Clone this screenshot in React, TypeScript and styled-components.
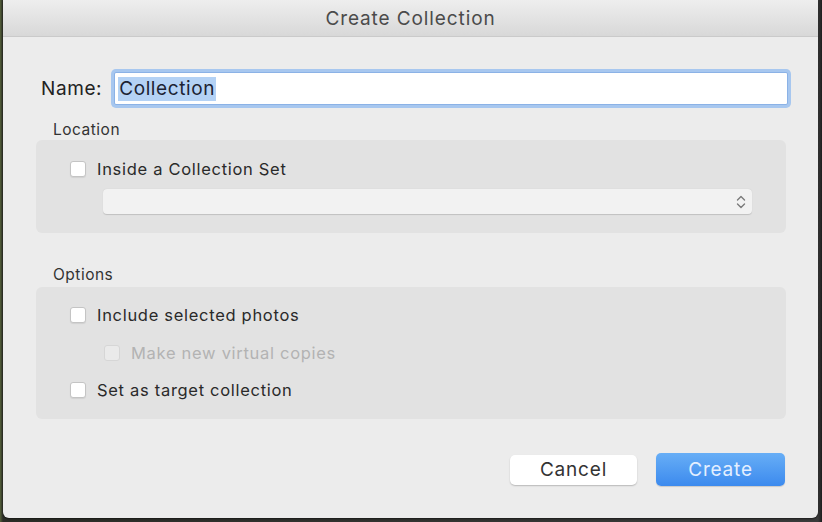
import React from 'react';
import styled, { createGlobalStyle } from 'styled-components';

const GlobalStyle = createGlobalStyle`
  html, body {
    margin: 0;
    padding: 0;
    background: #2e3129;
  }
  body {
    font-family: Inter, "Noto Sans", "Liberation Sans", sans-serif;
    -webkit-font-smoothing: antialiased;
  }
`;

const Screen = styled.div`
  width: 822px;
  height: 522px;
  background: linear-gradient(90deg, #55613a 0px, #2b2d27 3px, #3a3a3a 818px, #1d1d1d 822px);
  overflow: hidden;
`;

const Dialog = styled.div`
  width: 815px;
  height: 518px;
  margin-left: 3px;
  background: #ececec;
  border-radius: 0 0 6px 6px;
  display: flex;
  flex-direction: column;
  box-shadow: 0 1px 2px rgba(0, 0, 0, 0.5);
`;

const TitleBar = styled.div`
  height: 36px;
  flex-shrink: 0;
  display: flex;
  align-items: center;
  justify-content: center;
  background: linear-gradient(#eeeeee, #d8d8d8);
  border-bottom: 1px solid #cacaca;
  font-size: 19px;
  letter-spacing: 0.9px;
  color: #4b4b4b;
`;

const Body = styled.div`
  flex: 1;
  display: flex;
  flex-direction: column;
  padding: 31px 32px 0 33px;
`;

const NameRow = styled.div`
  display: flex;
  align-items: center;
  gap: 8px;
  margin-right: -6px;
  padding-left: 5px;
`;

const NameLabel = styled.span`
  font-size: 19px;
  letter-spacing: 0.6px;
  color: #222;
`;

const NameField = styled.div`
  flex: 1;
  height: 33px;
  margin: 4px;
  display: flex;
  align-items: center;
  background: #fff;
  border: 1px solid #8bb2e6;
  box-shadow: 0 0 0 3px #a7c7ef;
  border-radius: 2px;
  box-sizing: border-box;
  padding-left: 3px;
`;

const Selected = styled.span`
  background: #b4d2f5;
  font-size: 19px;
  letter-spacing: 0.6px;
  line-height: 24px;
  color: #1c2333;
  padding: 0 1px;
`;

const SectionLabel = styled.div<{ $top: number }>`
  margin-top: ${p => p.$top}px;
  padding-left: 17px;
  font-size: 15.5px;
  letter-spacing: 0.5px;
  line-height: 18px;
  color: #333;
`;

const Group = styled.div<{ $height: number; $gap: number; $pad: number }>`
  margin-top: ${p => p.$gap}px;
  height: ${p => p.$height}px;
  box-sizing: border-box;
  background: #e2e2e2;
  border-radius: 6px;
  display: flex;
  flex-direction: column;
  padding: ${p => p.$pad}px 34px 0 34px;
`;

const CheckRow = styled.label<{ $indent?: boolean; $disabled?: boolean }>`
  display: flex;
  align-items: center;
  gap: 11px;
  height: 18px;
  margin-left: ${p => (p.$indent ? 34 : 0)}px;
  font-size: 16.5px;
  letter-spacing: 0.7px;
  color: ${p => (p.$disabled ? '#b3b3b3' : '#2a2a2a')};
`;

const Box = styled.span<{ $disabled?: boolean }>`
  width: 16px;
  height: 16px;
  box-sizing: border-box;
  border-radius: 3px;
  background: ${p => (p.$disabled ? '#eaeaea' : '#fff')};
  border: 1px solid ${p => (p.$disabled ? '#d6d6d6' : '#c4c4c4')};
  box-shadow: ${p => (p.$disabled ? 'none' : '0 1px 1px rgba(0,0,0,0.08)')};
  flex-shrink: 0;
`;

const Select = styled.div`
  margin: 11px 0 0 33px;
  height: 25px;
  background: #f2f2f2;
  border-radius: 4px;
  box-shadow: 0 0.5px 1px rgba(0, 0, 0, 0.15);
  display: flex;
  align-items: center;
  justify-content: flex-end;
  padding-right: 5px;
`;

const Spacer = styled.div<{ $h: number }>`
  height: ${p => p.$h}px;
  flex-shrink: 0;
`;

const Footer = styled.div`
  margin-top: auto;
  margin-bottom: 32px;
  display: flex;
  justify-content: flex-end;
  align-items: center;
  gap: 19px;
  padding-right: 1px;
`;

const Button = styled.button<{ $primary?: boolean }>`
  font-family: inherit;
  font-size: 19px;
  letter-spacing: 0.8px;
  border: none;
  border-radius: 5px;
  cursor: default;
  width: ${p => (p.$primary ? 129 : 127)}px;
  height: ${p => (p.$primary ? 33 : 30)}px;
  color: ${p => (p.$primary ? '#e4efff' : '#333')};
  background: ${p => (p.$primary ? 'linear-gradient(#67aef6, #3c8aee)' : '#fff')};
  box-shadow: ${p => (p.$primary ? '0 1px 1px rgba(0,0,0,0.15)' : '0 1px 1.5px rgba(0,0,0,0.22)')};
`;

const Stepper = () => (
  <svg width="12" height="16" viewBox="0 0 12 16" fill="none" stroke="#7a7a7a" strokeWidth="1.4" strokeLinecap="round" strokeLinejoin="round">
    <path d="M2.5 6 L6 2.5 L9.5 6" />
    <path d="M2.5 10 L6 13.5 L9.5 10" />
  </svg>
);

export default function App() {
  return (
    <Screen>
      <GlobalStyle />
      <Dialog>
        <TitleBar>Create Collection</TitleBar>
        <Body>
          <NameRow>
            <NameLabel>Name:</NameLabel>
            <NameField>
              <Selected>Collection</Selected>
            </NameField>
          </NameRow>
          <SectionLabel $top={12}>Location</SectionLabel>
          <Group $height={93} $gap={1} $pad={20}>
            <CheckRow>
              <Box />
              Inside a Collection Set
            </CheckRow>
            <Select>
              <Stepper />
            </Select>
          </Group>
          <SectionLabel $top={33}>Options</SectionLabel>
          <Group $height={132} $gap={3} $pad={19}>
            <CheckRow>
              <Box />
              Include selected photos
            </CheckRow>
            <Spacer $h={20} />
            <CheckRow $indent $disabled>
              <Box $disabled />
              Make new virtual copies
            </CheckRow>
            <Spacer $h={19} />
            <CheckRow>
              <Box />
              Set as target collection
            </CheckRow>
          </Group>
          <Footer>
            <Button>Cancel</Button>
            <Button $primary>Create</Button>
          </Footer>
        </Body>
      </Dialog>
    </Screen>
  );
}
